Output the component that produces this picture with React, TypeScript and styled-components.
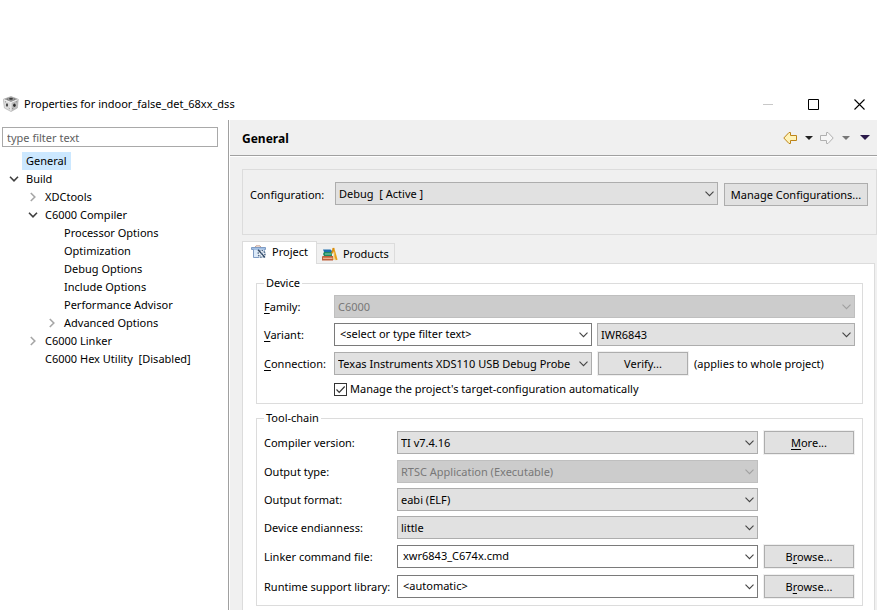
import React, { useState } from "react";
import styled, { createGlobalStyle } from "styled-components";

const GlobalStyle = createGlobalStyle`
  * { box-sizing: border-box; }
  body {
    margin: 0;
    background: #fff;
    color: #000;
    font-family: "Noto Sans", "Open Sans", sans-serif;
    font-size: 11px;
    line-height: 18px;
  }
  button, input, select { font: inherit; color: inherit; border-radius: 0; margin: 0; }
`;

const Window = styled.div`
  display: flex;
  flex-direction: column;
  min-height: 100vh;
  padding-top: 88px;
`;

const TitleBar = styled.header`
  display: flex;
  align-items: center;
  height: 32px;
  padding-left: 3px;
`;

const Title = styled.h1`
  flex: 1;
  margin: 0 0 0 5px;
  font-size: 11px;
  font-weight: 400;
  white-space: nowrap;
`;

const CaptionButton = styled.button`
  display: grid;
  place-items: center;
  width: 45px;
  height: 32px;
  padding: 0;
  border: 0;
  background: transparent;
  &:last-child { width: 41px; padding-left: 5px; }
`;

const Body = styled.div`
  display: flex;
  flex: 1;
`;

const Sidebar = styled.nav`
  flex: none;
  width: 229px;
  padding: 7px 10px 0 2px;
  border-right: 1px solid #a0a0a0;
`;

const Filter = styled.input`
  display: block;
  width: 100%;
  height: 20px;
  padding: 0 4px;
  border: 1px solid #a9a9a9;
  outline: 0;
  &::placeholder { color: #606060; opacity: 1; }
`;

const Tree = styled.ul`
  margin: 5px 0 0;
  padding: 0;
  list-style: none;
`;

const TreeRow = styled.li<{ $level: number }>`
  display: flex;
  align-items: center;
  height: 18px;
  padding-left: ${(p) => 4 + p.$level * 19}px;
`;

const Twisty = styled.span`
  display: grid;
  place-items: center;
  flex: none;
  width: 16px;
  height: 18px;
`;

const TreeLabel = styled.a<{ $selected?: boolean }>`
  padding: 0 4px;
  color: #000;
  text-decoration: none;
  white-space: pre;
  background: ${(p) => (p.$selected ? "#cce8ff" : "transparent")};
`;

const Main = styled.main`
  display: flex;
  flex-direction: column;
  flex: 1;
  min-width: 0;
  margin-left: 1px;
  background: #f0f0f0;
`;

const PageHeader = styled.div`
  display: flex;
  align-items: center;
  height: 36px;
  padding: 2px 3px 0 12px;
  border-bottom: 1px solid #a0a0a0;
  box-shadow: 0 1px 0 #fff;
`;

const PageTitle = styled.h2`
  flex: 1;
  margin: 0;
  font-size: 12px;
  font-weight: 700;
`;

const HistoryButton = styled.button<{ $wide?: boolean }>`
  display: grid;
  place-items: center;
  width: ${(p) => (p.$wide ? 18 : 19)}px;
  height: 20px;
  padding: 0 0 2px;
  border: 0;
  background: transparent;
`;

const ConfigBox = styled.section`
  display: grid;
  grid-template-columns: 80px 1fr auto;
  column-gap: 5px;
  align-items: start;
  margin: 13px 0 0 12px;
  padding: 12px 7px 27px;
  border: 1px solid #dcdcdc;
`;

const FieldLabel = styled.label`
  align-self: center;
  white-space: nowrap;
`;

const Mnemonic = styled.span`
  text-decoration: underline;
  text-underline-offset: 2px;
`;

const Tabs = styled.div`
  display: flex;
  align-items: flex-end;
  margin: 6px 0 0 12px;
`;

const Tab = styled.button<{ $active?: boolean }>`
  display: flex;
  align-items: center;
  gap: 5px;
  height: ${(p) => (p.$active ? 23 : 20)}px;
  margin-bottom: ${(p) => (p.$active ? -1 : 0)}px;
  padding: ${(p) => (p.$active ? "0 8px 2px" : "0 5px")};
  border: 1px solid #dcdcdc;
  border-bottom: 0;
  border-left-width: ${(p) => (p.$active ? 1 : 0)}px;
  background: ${(p) => (p.$active ? "#fff" : "#f0f0f0")};
  z-index: 1;
`;

const Panel = styled.section`
  display: flex;
  flex-direction: column;
  flex: 1;
  gap: 5px;
  margin: 0 2px 0 12px;
  padding: 10px 11px 4px 13px;
  border: 1px solid #dcdcdc;
  border-bottom: 0;
  background: #fff;
`;

const Group = styled.fieldset`
  min-width: 0;
  margin: 0;
  padding: 3px 7px 6px;
  border: 1px solid #dcdcdc;
`;

const Legend = styled.legend`
  height: 18px;
  padding: 0 2px;
`;

const DeviceGrid = styled.div`
  display: grid;
  grid-template-columns: 65px minmax(0, 1fr) minmax(0, 1fr);
  gap: 5px;
  align-items: center;
`;

const ToolGrid = styled.div`
  display: grid;
  grid-template-columns: 128px minmax(0, 1fr) 92px;
  gap: 5px;
  align-items: center;
`;

const Span = styled.div`
  grid-column: 2 / -1;
`;

const ButtonRow = styled.div`
  display: flex;
  align-items: center;
  gap: 5px;
  white-space: nowrap;
`;

const PushButton = styled.button<{ $wide?: boolean }>`
  width: ${(p) => (p.$wide ? 144 : 90)}px;
  height: 23px;
  margin: 1px;
  padding: 0;
  border: 1px solid #adadad;
  background: #e1e1e1;
  box-shadow: 0 0 0 1px #f0f0f0;
  line-height: 20px;
  white-space: nowrap;
`;

const ComboFrame = styled.div`
  display: grid;
  grid-template-columns: minmax(0, 1fr);
  align-items: center;
  & > * { grid-area: 1 / 1; }
  & > svg { justify-self: end; margin-right: 4px; pointer-events: none; }
`;

const Select = styled.select`
  appearance: none;
  width: 100%;
  height: 23px;
  padding: 0 16px 0 3px;
  border: 1px solid #adadad;
  background: #e1e1e1;
  line-height: 20px;
  &:disabled { background: #ccc; border-color: #bfbfbf; color: #787878; opacity: 1; }
`;

const Editable = styled.input`
  width: 100%;
  height: 23px;
  padding: 0 16px 2px 5px;
  border: 1px solid #7a7a7a;
  background: #fff;
  outline: 0;
`;

const CheckLabel = styled.label`
  display: flex;
  align-items: center;
  gap: 3px;
  height: 16px;
`;

const CheckBox = styled.input`
  appearance: none;
  width: 13px;
  height: 13px;
  border: 1px solid #333;
  background: #fff;
`;

const CheckFrame = styled.span`
  display: grid;
  & > * { grid-area: 1 / 1; }
  & > svg { pointer-events: none; visibility: hidden; }
  & > input:checked + svg { visibility: visible; }
`;

function Chevron({ color = "#444" }: { color?: string }) {
  return (
    <svg width="9" height="6" viewBox="0 0 9 6" fill="none" stroke={color} strokeWidth="1.1">
      <path d="M.5.7 4.5 4.7 8.5.7" />
    </svg>
  );
}

function Combo({ id, value, disabled, label }: { id: string; value: string; disabled?: boolean; label?: string }) {
  return (
    <ComboFrame>
      <Select id={id} disabled={disabled} aria-label={label} defaultValue={value}>
        <option value={value}>{value}</option>
      </Select>
      <Chevron color={disabled ? "#a0a0a0" : undefined} />
    </ComboFrame>
  );
}

function EditableCombo({ id, value }: { id: string; value: string }) {
  return (
    <ComboFrame>
      <Editable id={id} type="text" defaultValue={value} />
      <Chevron />
    </ComboFrame>
  );
}

function CubeIcon() {
  return (
    <svg width="16" height="16" viewBox="0 0 16 16" aria-hidden="true">
      <path d="M8 .5 15.3 3.3 8 6.5.3 3.3Z" fill="#989898" />
      <path d="M.3 3.3 8 6.5V15.5L1.4 12Z" fill="#dedede" />
      <path d="M15.3 3.3 8 6.5V15.5L14.4 12Z" fill="#bcbcbc" />
      <path d="M.5 3.4 8 6.5 15.2 3.4M8 6.5v9" stroke="#f2f2f2" fill="none" />
      <path d="M.3 3.3 8 .5l7.3 2.8-.9 8.7L8 15.5 1.4 12Z" fill="none" stroke="#a8a8a8" strokeWidth=".6" />
      <ellipse cx="8" cy="2.8" rx="2" ry=".9" fill="#333" />
      <ellipse cx="4" cy="9" rx="1.1" ry="1.7" fill="#484848" />
      <ellipse cx="11.4" cy="9.2" rx="1.3" ry="1.8" fill="#2c2c2c" />
      <path d="M2 5.6l.9.5M5.8 12.2l.8.5M9.4 12.6l.8-.5M13.2 6l.7-.4M4 3.2h1M11 3.2h1" stroke="#666" strokeWidth=".8" />
    </svg>
  );
}

function ProjectIcon() {
  return (
    <svg width="16" height="14" viewBox="0 0 16 14" aria-hidden="true">
      <path d="M4 2.5 5 .9h4l1 1.6" fill="none" stroke="#c09a88" />
      <path d="M.5 2.5h14v2h-1v8h-11v-8h-2Z" fill="#a3c0e4" stroke="#7f9cc4" />
      <path d="M3 5h4.5v7H3Z" fill="#dbe9f8" />
      <circle cx="10.6" cy="8.8" r="4.4" fill="#edf2f8" />
      <circle cx="10.6" cy="8.8" r="3.4" fill="none" stroke="#4b6788" strokeWidth="1.4" strokeDasharray="1.5 1.1" />
      <path d="M7 4.8l7 7.6" stroke="#2f4560" strokeWidth="1.3" />
      <path d="M13 6.4 8.4 11.4" stroke="#6c88ac" strokeDasharray="1.4 .8" />
    </svg>
  );
}

function BooksIcon() {
  return (
    <svg width="16" height="14" viewBox="0 0 16 14" aria-hidden="true">
      <path d="M1 2.5h7.5L10 4v1H2Z" fill="#1c6fae" />
      <path d="M2 5h8v4H2L1 7Z" fill="#1d8a63" />
      <path d="M3 7h6.5" stroke="#8fd0b0" />
      <path d="M0 9.5 1 9h10v4.5H0Z" fill="#c0603a" />
      <path d="M1 11.3h9.5" stroke="#f0b998" strokeWidth="1.2" />
      <path d="M11.3 1 14.6 13" stroke="#e8a01c" strokeWidth="2" />
      <path d="M11.6 1 9.8 6.5" stroke="#d68c12" strokeWidth="1.5" />
      <path d="M12.6 5.4 11.8 13" stroke="#f0bb4a" strokeWidth="1.2" />
    </svg>
  );
}

function HistoryArrow({ forward }: { forward?: boolean }) {
  return (
    <svg width="16" height="14" viewBox="0 0 16 14" aria-hidden="true">
      {forward ? (
        <path d="M1.5 4.5h6v-3h1.5L14.2 7 9 12.5H7.5v-3h-6Z" fill="#f6f6f6" stroke="#b0b0b0" />
      ) : (
        <path d="M14.5 4.5h-6v-3H7L1.8 7 7 12.5h1.5v-3h6Z" fill="#fff3b8" stroke="#bd8419" />
      )}
    </svg>
  );
}

function Triangle({ color }: { color: string }) {
  return (
    <svg width="8" height="4" viewBox="0 0 8 4" aria-hidden="true">
      <path d="M0 0h8L4 4Z" fill={color} />
    </svg>
  );
}

type TreeNode = { level: number; text: string; state?: "open" | "closed" };

const nodes: TreeNode[] = [
  { level: 0, text: "General" },
  { level: 0, text: "Build", state: "open" },
  { level: 1, text: "XDCtools", state: "closed" },
  { level: 1, text: "C6000 Compiler", state: "open" },
  { level: 2, text: "Processor Options" },
  { level: 2, text: "Optimization" },
  { level: 2, text: "Debug Options" },
  { level: 2, text: "Include Options" },
  { level: 2, text: "Performance Advisor" },
  { level: 2, text: "Advanced Options", state: "closed" },
  { level: 1, text: "C6000 Linker", state: "closed" },
  { level: 1, text: "C6000 Hex Utility  [Disabled]" },
];

function TreeChevron({ open }: { open: boolean }) {
  return open ? (
    <svg width="10" height="6" viewBox="0 0 10 6" fill="none" stroke="#404040" strokeWidth="1.6">
      <path d="M1 .8 5 4.8 9 .8" />
    </svg>
  ) : (
    <svg width="6" height="10" viewBox="0 0 6 10" fill="none" stroke="#a6a6a6" strokeWidth="1.6">
      <path d="M.8 1 4.8 5 .8 9" />
    </svg>
  );
}

export default function App() {
  const [selected, setSelected] = useState("General");
  return (
    <Window>
      <GlobalStyle />
      <TitleBar>
        <CubeIcon />
        <Title>Properties for indoor_false_det_68xx_dss</Title>
        <CaptionButton aria-label="Minimize">
          <svg width="11" height="11"><path d="M0 5.5h10" stroke="#c8c8c8" /></svg>
        </CaptionButton>
        <CaptionButton aria-label="Maximize">
          <svg width="11" height="11"><path d="M.5.5h10v10H.5Z" stroke="#000" fill="none" /></svg>
        </CaptionButton>
        <CaptionButton aria-label="Close">
          <svg width="11" height="11"><path d="M.5.5l10 10M10.5.5l-10 10" stroke="#000" strokeWidth="1.1" /></svg>
        </CaptionButton>
      </TitleBar>
      <Body>
        <Sidebar>
          <Filter type="text" placeholder="type filter text" aria-label="Filter" />
          <Tree>
            {nodes.map((n) => (
              <TreeRow key={n.text} $level={n.level}>
                <Twisty>{n.state && <TreeChevron open={n.state === "open"} />}</Twisty>
                <TreeLabel href="#" $selected={n.text === selected} onClick={() => setSelected(n.text)}>
                  {n.text}
                </TreeLabel>
              </TreeRow>
            ))}
          </Tree>
        </Sidebar>
        <Main>
          <PageHeader>
            <PageTitle>General</PageTitle>
            <HistoryButton $wide aria-label="Back"><HistoryArrow /></HistoryButton>
            <HistoryButton aria-label="Back history"><Triangle color="#222" /></HistoryButton>
            <HistoryButton $wide aria-label="Forward"><HistoryArrow forward /></HistoryButton>
            <HistoryButton aria-label="Forward history"><Triangle color="#777" /></HistoryButton>
            <HistoryButton aria-label="View menu">
              <svg width="10" height="5" aria-hidden="true"><path d="M0 0h10L5 5Z" fill="#2b1a4a" /></svg>
            </HistoryButton>
          </PageHeader>
          <ConfigBox>
            <FieldLabel htmlFor="configuration">Configuration:</FieldLabel>
            <Combo id="configuration" value={"Debug \u00a0[ Active ]"} />
            <PushButton $wide>Manage Configurations...</PushButton>
          </ConfigBox>
          <Tabs role="tablist">
            <Tab role="tab" aria-selected $active><ProjectIcon />Project</Tab>
            <Tab role="tab" aria-selected={false}><BooksIcon />Products</Tab>
          </Tabs>
          <Panel>
            <Group>
              <Legend>Device</Legend>
              <DeviceGrid>
                <FieldLabel htmlFor="family"><Mnemonic>F</Mnemonic>amily:</FieldLabel>
                <Span><Combo id="family" value="C6000" disabled /></Span>
                <FieldLabel htmlFor="variant"><Mnemonic>V</Mnemonic>ariant:</FieldLabel>
                <EditableCombo id="variant" value="<select or type filter text>" />
                <Combo id="device" label="Device variant" value="IWR6843" />
                <FieldLabel htmlFor="connection"><Mnemonic>C</Mnemonic>onnection:</FieldLabel>
                <Combo id="connection" value="Texas Instruments XDS110 USB Debug Probe" />
                <ButtonRow>
                  <PushButton>Verify...</PushButton>
                  <span>(applies to whole project)</span>
                </ButtonRow>
                <Span>
                  <CheckLabel>
                    <CheckFrame>
                      <CheckBox type="checkbox" defaultChecked />
                      <svg width="13" height="13"><path d="M2.5 6.5 5.2 9.3 10.7 3.5" fill="none" stroke="#333" strokeWidth="1.2" /></svg>
                    </CheckFrame>
                    Manage the project's target-configuration automatically
                  </CheckLabel>
                </Span>
              </DeviceGrid>
            </Group>
            <Group>
              <Legend>Tool-chain</Legend>
              <ToolGrid>
                <FieldLabel htmlFor="compiler">Compiler version:</FieldLabel>
                <Combo id="compiler" value="TI v7.4.16" />
                <PushButton><Mnemonic>M</Mnemonic>ore...</PushButton>
                <FieldLabel htmlFor="outtype">Output type:</FieldLabel>
                <Combo id="outtype" value="RTSC Application (Executable)" disabled />
                <span />
                <FieldLabel htmlFor="format">Output format:</FieldLabel>
                <Combo id="format" value="eabi (ELF)" />
                <span />
                <FieldLabel htmlFor="endian">Device endianness:</FieldLabel>
                <Combo id="endian" value="little" />
                <span />
                <FieldLabel htmlFor="linker">Linker command file:</FieldLabel>
                <EditableCombo id="linker" value="xwr6843_C674x.cmd" />
                <PushButton>B<Mnemonic>r</Mnemonic>owse...</PushButton>
                <FieldLabel htmlFor="runtime">Runtime support library:</FieldLabel>
                <EditableCombo id="runtime" value="<automatic>" />
                <PushButton>B<Mnemonic>r</Mnemonic>owse...</PushButton>
              </ToolGrid>
            </Group>
          </Panel>
        </Main>
      </Body>
    </Window>
  );
}
